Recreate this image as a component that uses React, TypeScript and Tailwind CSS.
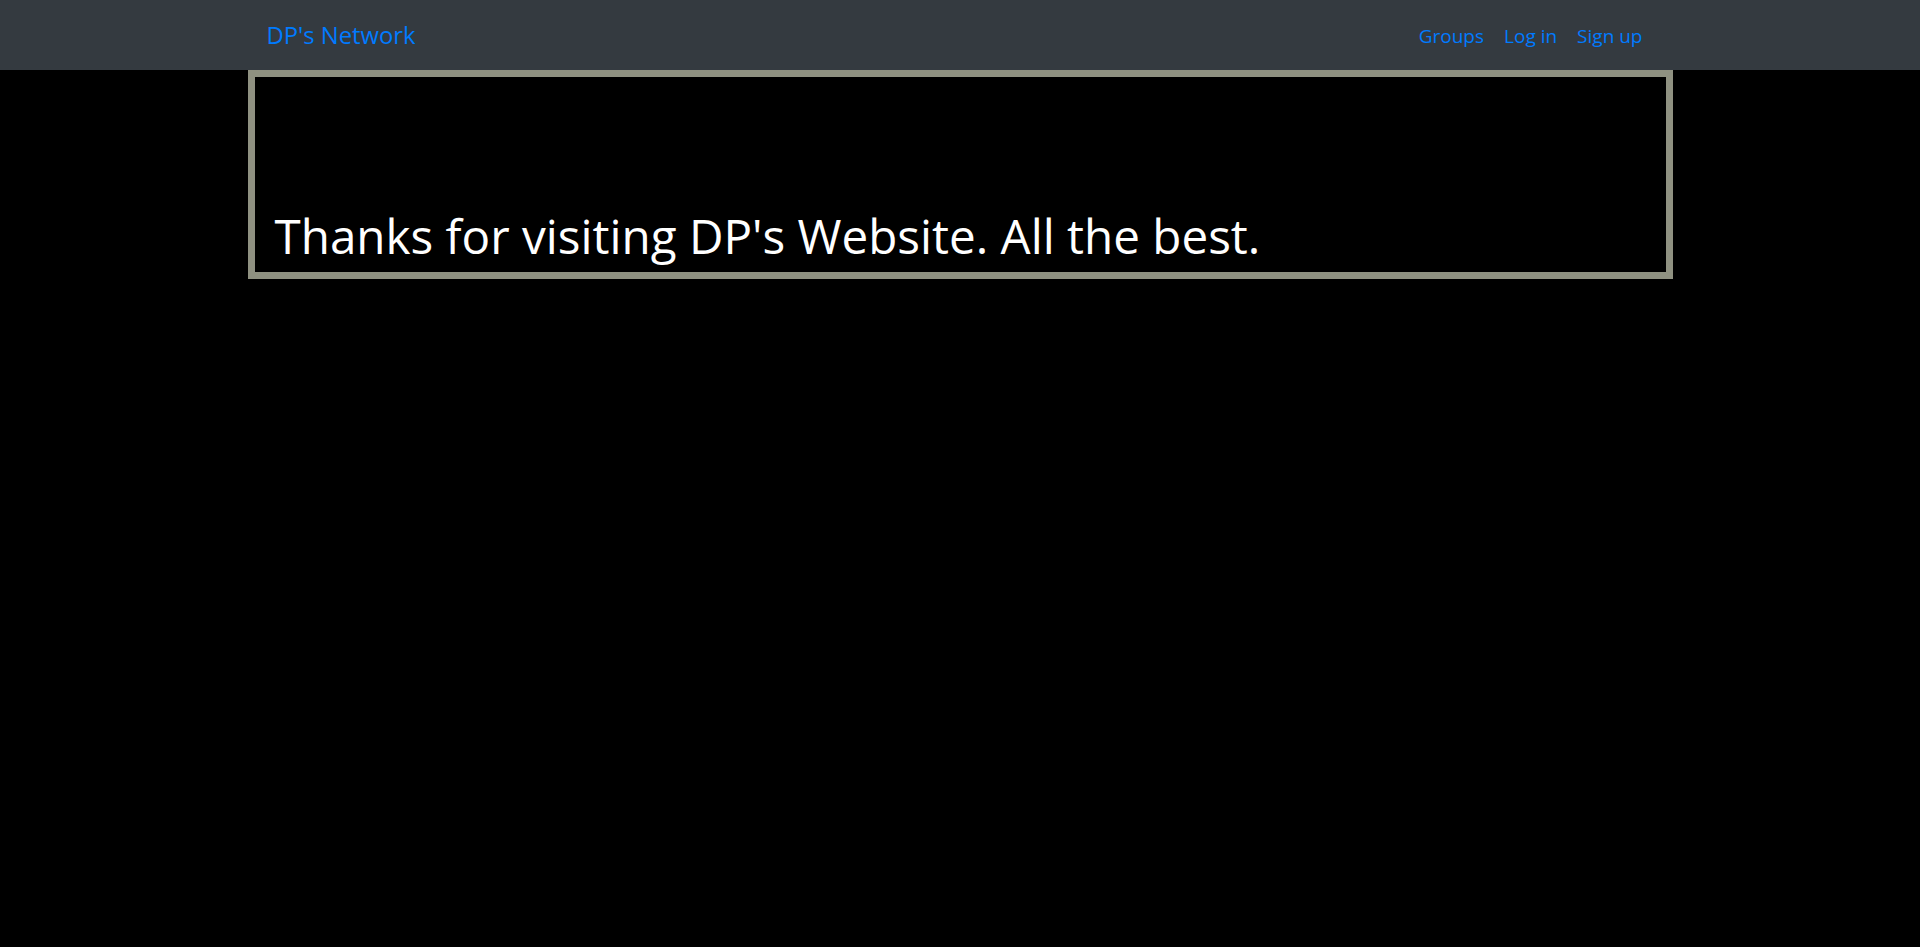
export default function App() {
  return (
    <div className="min-h-[947px] bg-black" style={{ fontFamily: '"Open Sans", "Noto Sans", sans-serif' }}>
      <nav className="h-[70px] bg-[#343a40]">
        <div className="mx-auto flex h-full w-[1425px] items-center justify-between pl-[19px] pr-[20px] pt-[2px]">
          <a href="#" className="text-[23.8px] text-[#007bff]">
            DP's Network
          </a>
          <div className="flex items-center">
            <a href="#" className="px-[10px] text-[19px] text-[#007bff]">Groups</a>
            <a href="#" className="px-[10px] text-[19px] text-[#007bff]">Log in</a>
            <a href="#" className="px-[10px] text-[19px] text-[#007bff]">Sign up</a>
          </div>
        </div>
      </nav>
      <div className="mx-auto flex h-[209px] w-[1425px] flex-col justify-end border-[7px] border-[#8f9181] px-[20px] pb-[8px]">
        <h1 className="text-[47.6px] leading-[1.2] text-white">Thanks for visiting DP's Website. All the best.</h1>
      </div>
    </div>
  )
}
